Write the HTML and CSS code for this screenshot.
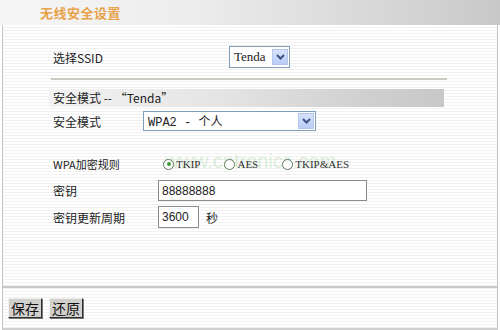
FILE: index.html
```html
<!DOCTYPE html>
<html>
<head>
<meta charset="utf-8">
<link rel="stylesheet" href="styles.css">
</head>
<body>
<div class="page">
  <div class="header"><span class="title">无线安全设置</span></div>
  <div class="panel">
    <div class="content">
      <div class="row row-ssid">
        <span class="label label-ssid">选择SSID</span>
        <div class="select select-ssid"><span class="sel-text">Tenda</span><span class="arrow"><svg width="9" height="6" viewBox="0 0 9 6"><path d="M1 1 L4.5 4.5 L8 1" fill="none" stroke="#3c5283" stroke-width="2"/></svg></span></div>
      </div>
      <div class="rule"></div>
      <div class="section-bar">安全模式 -- “Tenda”</div>
      <div class="row row-mode">
        <span class="label label-mode">安全模式</span>
        <div class="select select-mode"><span class="sel-text">WPA2 - 个人</span><span class="arrow"><svg width="9" height="6" viewBox="0 0 9 6"><path d="M1 1 L4.5 4.5 L8 1" fill="none" stroke="#3c5283" stroke-width="2"/></svg></span></div>
      </div>
      <div class="row row-radio">
        <span class="label label-wpa">WPA加密规则</span>
        <span class="radio-group">
          <span class="radio-item"><span class="radio checked"></span>TKIP</span>
          <span class="radio-item"><span class="radio"></span>AES</span>
          <span class="radio-item"><span class="radio"></span>TKIP&amp;AES</span>
        </span>
        <span class="watermark">www.cntronics.com</span>
      </div>
      <div class="row row-key">
        <span class="label label-key">密钥</span>
        <div class="input input-key">88888888</div>
      </div>
      <div class="row row-period">
        <span class="label label-key">密钥更新周期</span>
        <div class="input input-period">3600</div>
        <span class="unit">秒</span>
      </div>
    </div>
    <div class="footer">
      <button class="btn">保存</button>
      <button class="btn">还原</button>
    </div>
  </div>
</div>
</body>
</html>
```
FILE: styles.css
```css
html, body {
  margin: 0;
  padding: 0;
  background: #fff;
}
body {
  width: 500px;
  height: 330px;
  overflow: hidden;
  font-family: "Noto Sans CJK SC", "Liberation Sans", sans-serif;
  font-size: 12px;
  color: #222;
}
.page {
  width: 500px;
  height: 330px;
  display: flex;
  flex-direction: column;
}
.header {
  height: 25px;
  background: linear-gradient(to right, #f6f6f6 0%, #ececec 40%, #d2d2d2 85%, #c8c8c8 100%);
  display: flex;
  align-items: center;
  padding-left: 40px;
}
.title {
  color: #e8a24a;
  font-size: 13px;
  font-weight: bold;
  letter-spacing: 0.5px;
}
.panel {
  flex: 1;
  margin: 0 2px 0 2px;
  border-left: 1px solid #c4c4c4;
  border-right: 1px solid #c4c4c4;
  border-bottom: 2px solid #d0d0d0;
  background: repeating-linear-gradient(to bottom, #ffffff 0px, #ffffff 2px, #f1f1f1 2px, #f1f1f1 3px);
  display: flex;
  flex-direction: column;
}
.content {
  height: 261px;
  padding-left: 48px;
  position: relative;
  border-bottom: 2px solid #c8c8c8;
}
.row {
  display: flex;
  align-items: center;
}
.label {
  flex: none;
}
.row-ssid {
  margin-top: 21px;
  height: 22px;
}
.label-ssid { width: 176px; padding-left: 2px; }
.select {
  height: 20px;
  border: 1px solid #7f9db9;
  background: #fff;
  display: flex;
  align-items: center;
  justify-content: space-between;
  padding: 0 1px 0 4px;
  box-sizing: border-box;
}
.sel-text {
  font-family: "Liberation Serif", "Noto Sans CJK SC", serif;
  font-size: 13px;
}
.select-ssid { width: 61px; height: 22px; }
.select-mode { width: 173px; }
.select-mode .sel-text {
  font-family: "Liberation Mono", "Noto Sans CJK SC", monospace;
  font-size: 12px;
}
.arrow {
  width: 16px;
  height: 16px;
  background: linear-gradient(to bottom, #d6e2fc, #b9cdf6);
  border: 1px solid #b4c6ec;
  box-sizing: border-box;
  display: flex;
  align-items: center;
  justify-content: center;
}
.rule {
  margin-top: 10px;
  width: 396px;
  height: 2px;
  background: #cbcbc2;
}
.section-bar {
  margin-top: 9px;
  margin-left: -2px;
  width: 395px;
  height: 18px;
  line-height: 18px;
  padding-left: 4px;
  box-sizing: border-box;
  background: linear-gradient(to right, #f2f2f2 0%, #e6e6e6 40%, #d0d0d0 80%, #c8c8c8 100%);
}
.row-mode {
  margin-top: 4px;
  height: 20px;
}
.label-mode { width: 90px; padding-left: 2px; }
.row-radio {
  margin-top: 23px;
  height: 20px;
  position: relative;
}
.label-wpa { width: 110px; padding-left: 2px; font-size: 11px; }
.radio-group {
  display: flex;
  align-items: center;
  font-family: "Liberation Serif", serif;
  font-size: 11px;
  color: #333;
  position: relative;
  z-index: 1;
}
.radio-item {
  display: flex;
  align-items: center;
  gap: 2px;
  margin-right: 24px;
}
.radio {
  width: 9px;
  height: 9px;
  border: 1px solid #5a7a5a;
  border-radius: 50%;
  background: #fff;
  display: flex;
  align-items: center;
  justify-content: center;
}
.radio.checked::after {
  content: "";
  width: 4px;
  height: 4px;
  border-radius: 50%;
  background: #3ba03b;
}
.watermark {
  position: absolute;
  left: 114px;
  top: -4px;
  font-family: "Liberation Sans", sans-serif;
  font-size: 20px;
  color: rgba(140, 200, 130, 0.3);
  pointer-events: none;
  z-index: 0;
}
.row-key {
  margin-top: 6px;
  height: 21px;
}
.label-key { width: 105px; padding-left: 2px; }
.input {
  height: 21px;
  border: 1px solid #8c8c8c;
  background: #fff;
  box-sizing: border-box;
  padding-left: 3px;
  display: flex;
  align-items: center;
  font-family: "Liberation Sans", sans-serif;
  font-size: 12px;
}
.input-key { width: 209px; }
.row-period {
  margin-top: 5px;
  height: 22px;
}
.input-period { width: 41px; height: 22px; }
.unit { margin-left: 7px; }
.footer {
  display: flex;
  gap: 7px;
  padding: 10px 0 0 5px;
}
.btn {
  width: 34px;
  height: 20px;
  padding: 0;
  margin: 0;
  background: #d2d0cc;
  border: 1px solid;
  border-color: #f0f0f0 #303030 #303030 #f0f0f0;
  box-shadow: 1px 1px 0 #777;
  font-family: "Noto Sans CJK SC", sans-serif;
  font-size: 14px;
  line-height: 16px;
  color: #111;
}
```
